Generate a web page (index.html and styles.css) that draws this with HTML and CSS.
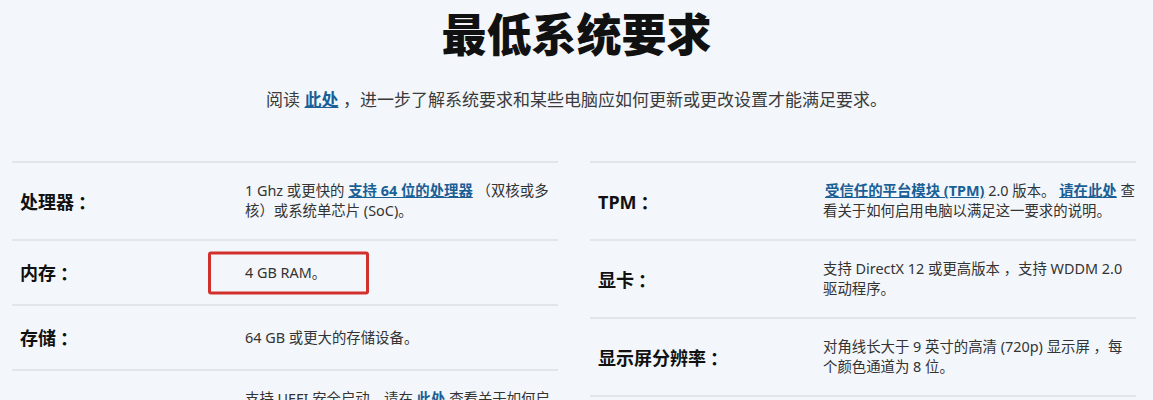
FILE: index.html
```html
<!DOCTYPE html>
<html lang="zh-CN">
<head>
  <meta charset="UTF-8" />
  <title>最低系统要求</title>
  <link rel="stylesheet" href="styles.css">
</head>
<body>
  <header class="intro">
    <h1>最低系统要求</h1>
    <p>阅读 <a href="#">此处</a> ，进一步了解系统要求和某些电脑应如何更新或更改设置才能满足要求。</p>
  </header>

  <div class="reqs">
    <div class="req-list">
      <div class="req-row">
        <div class="req-label">处理器<span class="colon">：</span></div>
        <div class="req-value">1 Ghz 或更快的 <a href="#">支持 64 位的处理器</a> （双核或多核）或系统单芯片 (SoC)。</div>
      </div>
      <div class="req-row">
        <div class="req-label">内存<span class="colon">：</span></div>
        <div class="req-value">4 GB RAM。<span class="mark"></span></div>
      </div>
      <div class="req-row">
        <div class="req-label">存储<span class="colon">：</span></div>
        <div class="req-value">64 GB 或更大的存储设备。</div>
      </div>
      <div class="req-row">
        <div class="req-label">系统固件<span class="colon">：</span></div>
        <div class="req-value">支持 UEFI 安全启动。请在 <a href="#">此处</a> 查看关于如何启用电脑以满足这一要求的说明。</div>
      </div>
    </div>

    <div class="req-list">
      <div class="req-row">
        <div class="req-label">TPM<span class="colon">：</span></div>
        <div class="req-value"><a href="#" class="lead">受信任的平台模块 (TPM)</a> 2.0 版本。 <a href="#">请在此处</a> 查看关于如何启用电脑以满足这一要求的说明。</div>
      </div>
      <div class="req-row">
        <div class="req-label">显卡<span class="colon">：</span></div>
        <div class="req-value">支持 DirectX 12 或更高版本 ，支持 WDDM 2.0 驱动程序。</div>
      </div>
      <div class="req-row">
        <div class="req-label">显示屏分辨率<span class="colon">：</span></div>
        <div class="req-value">对角线长大于 9 英寸的高清 (720p) 显示屏 ，每个颜色通道为 8 位。</div>
      </div>
      <div class="req-row">
        <div class="req-label">Internet 连接<span class="colon">：</span></div>
        <div class="req-value">Windows 11 家庭版需要 Internet 连接和 Microsoft 账户才能完成设备设置。</div>
      </div>
    </div>
  </div>
</body>
</html>
```

FILE: styles.css
```css
body {
  margin: 0;
  font-family: "Noto Sans", "Noto Sans CJK SC", sans-serif;
  color: #222;
  background-color: #f3f7fb;
}

.intro {
  text-align: center;
  padding-top: 5px;
}

.intro h1 {
  margin: 0;
  font-size: 45px;
  line-height: 60px;
  font-weight: 900;
  color: #111;
}

.intro p {
  margin: 22px 0 0;
  font-size: 17px;
  line-height: 26px;
  color: #3a3a3a;
}

a {
  color: #1a5f95;
  font-weight: bold;
  text-decoration: underline;
}

.reqs {
  display: flex;
  gap: 32px;
  width: 1124px;
  margin: 48px 0 0 12px;
}

.req-list {
  flex: 1;
}

.req-row {
  display: grid;
  grid-template-columns: 233px 1fr;
  align-items: center;
  padding: 18px 0;
  border-top: 2px solid #e1e6eb;
}

.req-label {
  padding-left: 8px;
  font-size: 18px;
  line-height: 26px;
  font-weight: bold;
  color: #111;
}

.colon {
  font-family: "Noto Sans CJK TC", sans-serif;
  margin-left: 4px;
}

.req-value {
  position: relative;
  font-size: 14.4px;
  line-height: 20px;
  color: #333;
}

.lead {
  margin-left: 2px;
}

.mark {
  position: absolute;
  left: -37px;
  top: 50%;
  width: 155px;
  height: 37px;
  transform: translateY(-50%);
  border: 3px solid #d2302c;
  border-radius: 3px;
}
```
